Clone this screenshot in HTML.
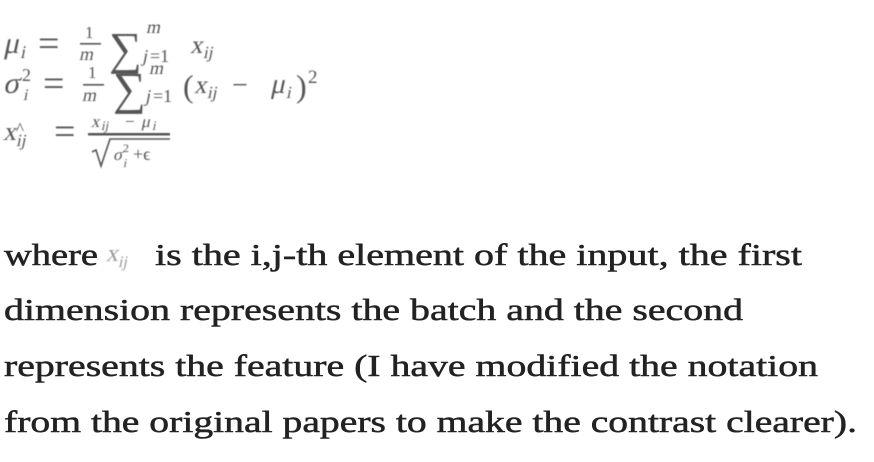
<!DOCTYPE html>
<html><head><meta charset="utf-8"><style>
html,body{margin:0;padding:0;background:#fff;width:874px;height:462px;overflow:hidden}
svg{display:block}
</style></head><body>
<svg width="874" height="462" viewBox="0 0 874 462">
<defs><filter id="b"><feGaussianBlur stdDeviation="0.45"/></filter></defs>
<g filter="url(#b)" fill="#555" font-family="Liberation Serif, serif">
<!-- row 1 -->
<text transform="translate(3,53) skewX(-12)" font-size="30">μ</text>
<text transform="translate(20,58) skewX(-12)" font-size="18">i</text>
<text x="38" y="56" font-size="38">=</text>
<text x="85" y="38" font-size="17">1</text>
<rect x="80" y="43" width="21" height="1.6"/>
<text transform="translate(79,60) skewX(-12)" font-size="18">m</text>
<text x="109" y="64" font-size="46">∑</text>
<text transform="translate(146,33) skewX(-12)" font-size="18">m</text>
<text transform="translate(142,62) skewX(-12)" font-size="18">j</text>
<text x="150" y="62" font-size="18">=1</text>
<text transform="translate(190,53) skewX(-12)" font-size="25">x</text>
<text transform="translate(203,58) skewX(-12)" font-size="17">ij</text>
<!-- row 2 -->
<text transform="translate(3,93) skewX(-12)" font-size="30">σ</text>
<text x="22" y="81" font-size="18">2</text>
<text transform="translate(23,100) skewX(-12)" font-size="16">i</text>
<text x="43" y="96" font-size="38">=</text>
<text x="88" y="78" font-size="17">1</text>
<rect x="83" y="84" width="21" height="1.6"/>
<text transform="translate(82,101) skewX(-12)" font-size="18">m</text>
<text x="113" y="104" font-size="46">∑</text>
<text transform="translate(149,74) skewX(-12)" font-size="18">m</text>
<text transform="translate(145,102) skewX(-12)" font-size="18">j</text>
<text x="153" y="102" font-size="18">=1</text>
<text x="183" y="97" font-size="32">(</text>
<text transform="translate(194,93) skewX(-12)" font-size="25">x</text>
<text transform="translate(207,98) skewX(-12)" font-size="17">ij</text>
<text x="232" y="94" font-size="28">−</text>
<text transform="translate(270,93) skewX(-12)" font-size="28">μ</text>
<text transform="translate(286,98) skewX(-12)" font-size="17">i</text>
<text x="296" y="97" font-size="32">)</text>
<text x="308" y="83" font-size="19">2</text>
<!-- row 3 -->
<text transform="translate(3,140) skewX(-12)" font-size="26">x</text>
<text x="16" y="134" font-size="17">^</text>
<text transform="translate(16,146) skewX(-12)" font-size="17">ij</text>
<text x="54" y="144" font-size="38">=</text>
<text transform="translate(91,127) skewX(-12)" font-size="17">x</text>
<text transform="translate(101,130) skewX(-12)" font-size="13">ij</text>
<text x="125" y="127" font-size="17">−</text>
<text transform="translate(141,127) skewX(-12)" font-size="17">μ</text>
<text transform="translate(152,130) skewX(-12)" font-size="13">i</text>
<rect x="88" y="133" width="82" height="2.5"/>
<path d="M92 152 L96 150 L101 166 L110 139 L170 139" stroke="#555" stroke-width="1.6" fill="none"/>
<text transform="translate(113,160) skewX(-12)" font-size="17">σ</text>
<text x="123" y="152" font-size="12">2</text>
<text transform="translate(123,167) skewX(-12)" font-size="12">i</text>
<text x="133" y="160" font-size="18">+ϵ</text>
<!-- inline x_ij -->
<text transform="translate(106,261) skewX(-12)" font-size="24" fill="#999">x</text>
<text transform="translate(118,267) skewX(-12)" font-size="16" fill="#999">ij</text>
</g>
<g fill="#222" stroke="#222" stroke-width="0.5" font-family="Liberation Serif, serif" font-size="31">
<text x="4" y="265" textLength="94" lengthAdjust="spacingAndGlyphs">where</text>
<text x="155" y="265" textLength="647" lengthAdjust="spacingAndGlyphs">is the i,j-th element of the input, the first</text>
<text x="4" y="320" textLength="739" lengthAdjust="spacingAndGlyphs">dimension represents the batch and the second</text>
<text x="4" y="376" textLength="814" lengthAdjust="spacingAndGlyphs">represents the feature (I have modified the notation</text>
<text x="4" y="432" textLength="853" lengthAdjust="spacingAndGlyphs">from the original papers to make the contrast clearer).</text>
</g>
</svg>
</body></html>
